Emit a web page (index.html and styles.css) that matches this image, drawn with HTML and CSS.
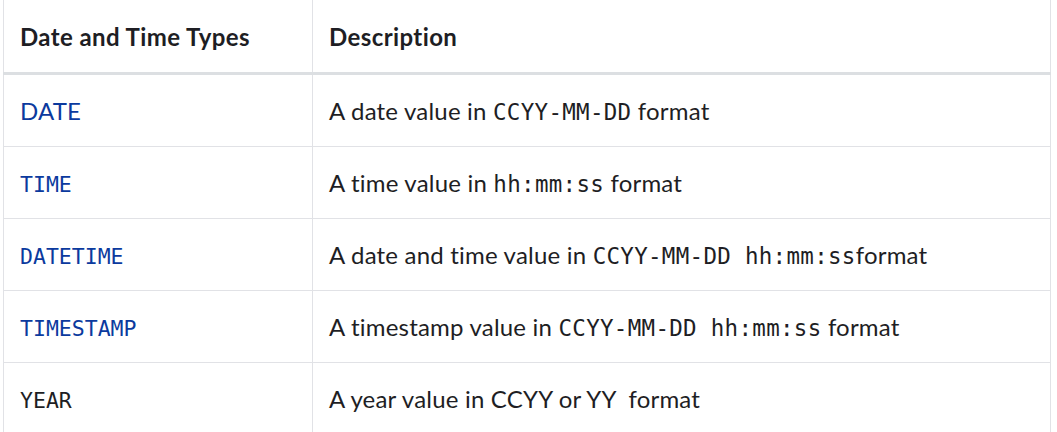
FILE: index.html
```html
<!DOCTYPE html>
<html>
<head>
<meta charset="utf-8">
<link rel="stylesheet" href="styles.css">
</head>
<body>
<table class="types">
  <thead>
    <tr><th class="c1">Date and Time Types</th><th>Description</th></tr>
  </thead>
  <tbody>
    <tr><td class="c1"><span class="link">DATE</span></td><td>A date value in <code>CCYY-MM-DD</code> format</td></tr>
    <tr><td class="c1"><code class="link">TIME</code></td><td>A time value in <code>hh:mm:ss</code> format</td></tr>
    <tr><td class="c1"><code class="link">DATETIME</code></td><td>A date and time value in <code>CCYY-MM-DD hh:mm:ss</code>format</td></tr>
    <tr><td class="c1"><code class="link">TIMESTAMP</code></td><td>A timestamp value in <code>CCYY-MM-DD hh:mm:ss</code> format</td></tr>
    <tr><td class="c1"><code>YEAR</code></td><td>A year value in CCYY or YY&nbsp; format</td></tr>
  </tbody>
</table>
</body>
</html>
```
FILE: styles.css
```css
html, body {
  margin: 0;
  padding: 0;
  background: #ffffff;
}
body {
  font-family: Lato, "Open Sans", sans-serif;
  color: #1e1e24;
  font-size: 24px;
  letter-spacing: 0.2px;
}
.types {
  margin-left: 3px;
  width: 1048px;
  border-collapse: collapse;
  border-left: 1px solid #e1e2e6;
  border-right: 1px solid #e1e2e6;
}
.types th {
  text-align: left;
  font-weight: 700;
  height: 72px;
  padding: 0 16px;
  border-bottom: 3px solid #dcdfe2;
  border-left: 1px solid #e1e2e6;
  letter-spacing: 0.4px;
}
.types td {
  height: 71px;
  padding: 0 16px;
  border-bottom: 1px solid #e1e2e6;
  border-left: 1px solid #e1e2e6;
  vertical-align: middle;
}
.types .c1 {
  width: 276px;
}
code {
  font-family: "DejaVu Sans Mono", monospace;
  font-size: 22.5px;
  letter-spacing: 0.3px;
}
.types .c1 code {
  font-size: 21.5px;
  letter-spacing: 0;
}
.link {
  color: #0b3a9e;
}
```
